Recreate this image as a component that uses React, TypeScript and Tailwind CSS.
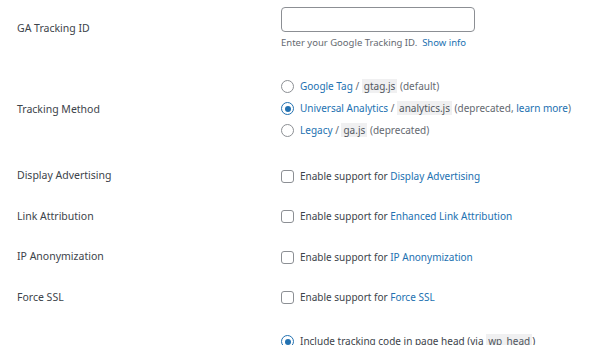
import React from "react";

const font = { fontFamily: '"Noto Sans", "Open Sans", sans-serif' };

const Code = ({ children }: { children: React.ReactNode }) => (
  <code className="bg-[#f0f0f1] px-[2px] text-[#50575e]" style={font}>
    {children}
  </code>
);

const Link = ({ children }: { children: React.ReactNode }) => (
  <a className="text-[#2271b1]">{children}</a>
);

const Radio = ({ checked }: { checked?: boolean }) => (
  <span
    className={
      "flex h-[13px] w-[13px] shrink-0 items-center justify-center rounded-full border bg-white " +
      (checked ? "border-[#2271b1]" : "border-[#8c8f94]")
    }
  >
    {checked && <span className="h-[6px] w-[6px] rounded-full bg-[#2271b1]" />}
  </span>
);

const Checkbox = () => (
  <span className="h-[13px] w-[13px] shrink-0 rounded-[3px] border border-[#8c8f94] bg-white" />
);

const Row = ({
  label,
  h,
  labelPad = "",
  children,
}: {
  label: string;
  h: string;
  labelPad?: string;
  children: React.ReactNode;
}) => (
  <div className={"flex items-center " + h}>
    <div className={"w-[281px] shrink-0 pl-[17px] text-[10.5px] text-[#3c434a] " + labelPad}>
      {label}
    </div>
    <div className="flex-1">{children}</div>
  </div>
);

const CheckRow = ({ label, link }: { label: string; link: string }) => (
  <Row label={label} h="h-[40.5px]">
    <div className="flex items-center gap-[6px] text-[10px] text-[#3c434a]">
      <Checkbox />
      <span>
        Enable support for <Link>{link}</Link>
      </span>
    </div>
  </Row>
);

export default function App() {
  return (
    <div className="h-[345px] w-[600px] overflow-hidden bg-white" style={font}>
      <Row label="GA Tracking ID" h="h-[57px]">
        <div className="flex flex-col pt-[1px]">
          <input
            type="text"
            className="h-[25px] w-[194px] rounded-[4px] border border-[#8c8f94] bg-white"
          />
          <p className="mt-[4px] text-[9.5px] text-[#646970]">
            Enter your Google Tracking ID.&nbsp; <Link>Show info</Link>
          </p>
        </div>
      </Row>

      <Row label="Tracking Method" h="h-[99px]" labelPad="pt-[6px]">
        <div className="flex flex-col gap-[7px] pt-[4px] text-[10px] text-[#646970]">
          <div className="flex items-center gap-[6px]">
            <Radio />
            <span>
              <Link>Google Tag</Link> / <Code>gtag.js</Code> (default)
            </span>
          </div>
          <div className="flex items-center gap-[6px]">
            <Radio checked />
            <span>
              <Link>Universal Analytics</Link> / <Code>analytics.js</Code> (deprecated,{" "}
              <Link>learn more</Link>)
            </span>
          </div>
          <div className="flex items-center gap-[6px]">
            <Radio />
            <span>
              <Link>Legacy</Link> / <Code>ga.js</Code> (deprecated)
            </span>
          </div>
        </div>
      </Row>

      <CheckRow label="Display Advertising" link="Display Advertising" />
      <CheckRow label="Link Attribution" link="Enhanced Link Attribution" />
      <CheckRow label="IP Anonymization" link="IP Anonymization" />
      <CheckRow label="Force SSL" link="Force SSL" />

      <div className="flex pt-[16px]">
        <div className="w-[281px] shrink-0" />
        <div className="flex items-center gap-[6px] text-[10px] text-[#3c434a]">
          <Radio checked />
          <span>
            Include tracking code in page head (via <Code>wp_head</Code>)
          </span>
        </div>
      </div>
    </div>
  );
}
